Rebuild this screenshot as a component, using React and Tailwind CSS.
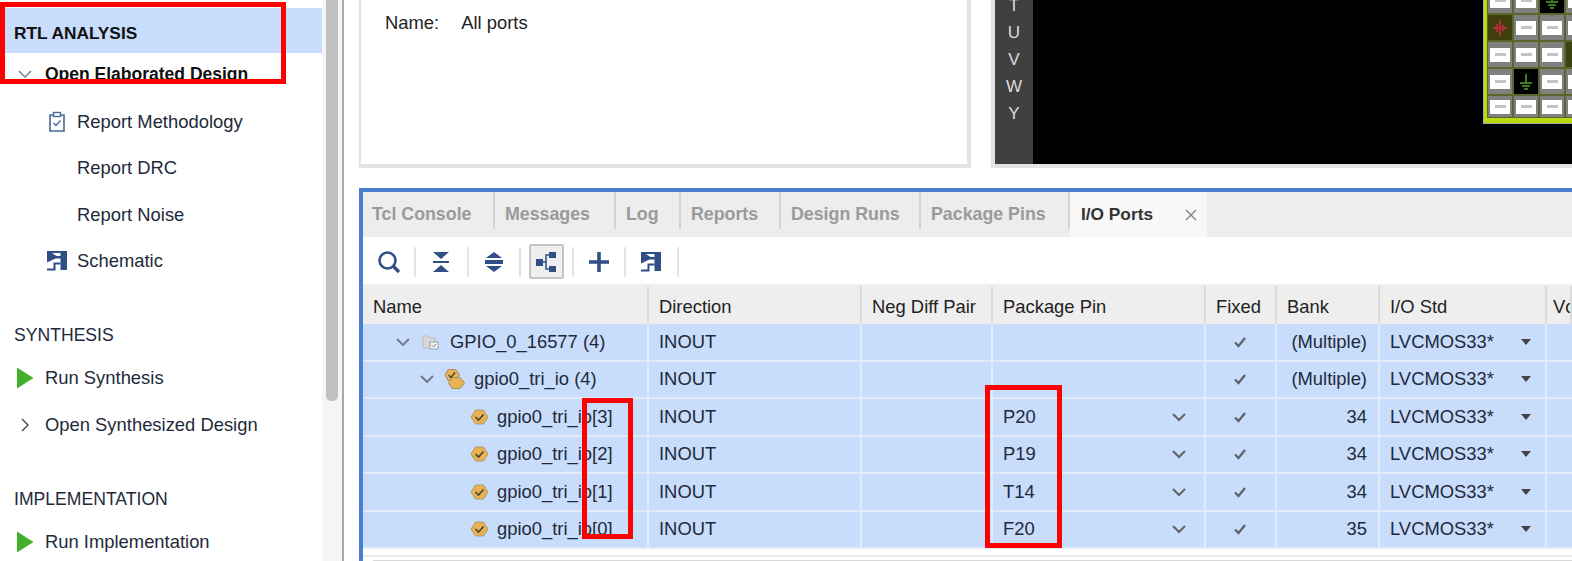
const BLUE = '#2f4f86';

function Chevron({ dir = 'down', className = '', color = '#666', sw = 1.4 }) {
  const d = dir === 'down' ? 'M2 5 L8 11 L14 5' : 'M5 2 L11 8 L5 14';
  return (
    <svg width="16" height="16" viewBox="0 0 16 16" className={className}>
      <path d={d} fill="none" stroke={color} strokeWidth={sw} />
    </svg>
  );
}

function Play() {
  return (
    <svg width="18" height="22" viewBox="0 0 18 22" className="shrink-0">
      <path d="M1 0.5 L17.5 11 L1 21.5 Z" fill="#43b02a" />
    </svg>
  );
}

function ClipCheck() {
  return (
    <svg width="18" height="22" viewBox="0 0 18 22" className="shrink-0">
      <path d="M5 4 H2 V20 H16 V4 H13" fill="none" stroke="#4a6796" strokeWidth="1.6" />
      <rect x="5.5" y="1.5" width="7" height="4" fill="none" stroke="#4a6796" strokeWidth="1.4" />
      <path d="M5.5 12 L8 14.5 L12.5 9.5" fill="none" stroke="#4a6796" strokeWidth="1.4" />
    </svg>
  );
}

function SchematicIcon({ size = 22 }) {
  return (
    <svg width={size} height={size} viewBox="0 0 22 22" className="shrink-0">
      <path fillRule="evenodd" d="M1 1 H21 V20 H14.5 V8.5 H9.5 L1 12.5 Z M6 3 L10.5 6 H14.5 V3 Z" fill={BLUE} />
      <path d="M1 19.5 H8.5 V13.5 H14.5" fill="none" stroke={BLUE} strokeWidth="2" />
    </svg>
  );
}

function Port({ className = '' }) {
  return (
    <svg width="19" height="18" viewBox="0 0 19 18" className={className}>
      <path d="M5.5 2 H13.5 L18 9 L13.5 16 H5.5 L1 9 Z" fill="#e8b250" stroke="#b09a70" strokeWidth="1" />
      <path d="M5.5 9 L8.5 12 L13.5 6.5" fill="none" stroke="#46443e" strokeWidth="1.6" />
    </svg>
  );
}

function PortGroup({ className = '' }) {
  return (
    <svg width="22" height="22" viewBox="0 0 22 22" className={className}>
      <path d="M4 1.5 H12 L15.5 7 L12 12.5 H4 L1 7 Z" fill="#e8b250" stroke="#a58f66" strokeWidth="1" />
      <path d="M8 9.5 H16 L20.5 15 L16 20.5 H8 L4.5 15 Z" fill="#e8b250" stroke="#a58f66" strokeWidth="1" />
      <path d="M4.5 7 L7 9.5 L11 4.5" fill="none" stroke="#46443e" strokeWidth="1.4" />
    </svg>
  );
}

function FolderIcon({ className = '' }) {
  return (
    <svg width="18" height="16" viewBox="0 0 18 16" className={className}>
      <path d="M1 2 H6 L8 4 H13 V14 H1 Z" fill="#d6d6d6" stroke="#bdbdbd" strokeWidth="1" />
      <rect x="8" y="8" width="8" height="7" fill="#eef1f5" stroke="#9aa0a8" strokeWidth="1" />
      <path d="M10 11.5 L11.5 13 L14 10" fill="none" stroke="#7f8790" strokeWidth="1" />
    </svg>
  );
}

function Check() {
  return (
    <svg width="14" height="12" viewBox="0 0 14 12">
      <path d="M2 6.5 L5.5 10 L12 2" fill="none" stroke="#5f6164" strokeWidth="2.2" />
    </svg>
  );
}

function Item({ icon, children, indent = false, bold = false, className = '' }) {
  return (
    <div className={`flex h-[46.5px] items-center ${className}`}>
      <div className={`flex shrink-0 items-center justify-center ${indent ? 'ml-[45px] w-[24px] mr-[8px]' : 'ml-[14px] w-[22px] mr-[9px]'}`}>{icon}</div>
      <span className={bold ? 'text-[17.5px] font-bold text-[#111]' : 'text-[#222a3a]'}>{children}</span>
    </div>
  );
}

function Sidebar() {
  return (
    <div className="w-[322px] shrink-0 bg-white pt-[8px]">
      <div className="flex h-[45px] items-center bg-[#c8dcfb] pl-[14px] pt-[7px] text-[17.3px] font-bold text-[#111]">RTL ANALYSIS</div>
      <Item bold className="-mt-[2px]" icon={<Chevron color="#6b7a96" />}>Open Elaborated Design</Item>
      <div className="pt-[1px]">
        <Item indent icon={<ClipCheck />}>Report Methodology</Item>
        <Item indent>Report DRC</Item>
        <Item indent>Report Noise</Item>
        <Item indent icon={<SchematicIcon />}>Schematic</Item>
      </div>
      <div className="mt-[33px] flex h-[37.5px] items-center pl-[14px] text-[17.6px] text-[#222a3a]">SYNTHESIS</div>
      <Item icon={<Play />}>Run Synthesis</Item>
      <Item icon={<Chevron dir="right" color="#444" />}>Open Synthesized Design</Item>
      <div className="mt-[33px] flex h-[38px] items-center pl-[14px] text-[17.6px] text-[#222a3a]">IMPLEMENTATION</div>
      <Item icon={<Play />}>Run Implementation</Item>
    </div>
  );
}

function Scroll() {
  return (
    <div className="flex w-[22px] shrink-0 border-r-2 border-[#a8a8a8] bg-[#f5f5f5] pl-[4px]">
      <div className="h-[401px] w-[12px] rounded-b-[5px] bg-[#c0c0c0]" />
    </div>
  );
}

const PIN = 'pin', PWR = 'pwr', GND = 'gnd', OLV = 'olv';
const CHIP = [
  [PIN, PIN, GND, PIN],
  [PWR, PIN, PIN, PIN],
  [PIN, PIN, PIN, OLV],
  [PIN, GND, PIN, PIN],
  [PIN, PIN, PIN, PIN],
];

function ChipCell({ type }) {
  if (type === PIN) {
    return (
      <div className="flex h-full items-center justify-center border border-[#59662b] bg-[#808080]">
        <div className="flex h-[14px] w-[20px] items-center justify-center bg-white">
          <div className="h-[3px] w-[11px] bg-[#c4c4c4]" />
        </div>
      </div>
    );
  }
  if (type === OLV) return <div className="h-full border border-[#59662b] bg-[#3d4212]" />;
  if (type === PWR) {
    return (
      <div className="flex h-full items-center justify-center border border-[#59662b] bg-[#3d3f0c]">
        <svg width="16" height="18" viewBox="0 0 16 18">
          <path d="M8 1 V17 M1 9 H15 M5 5 V13 M11 6 V12" stroke="#b32a3a" strokeWidth="2" fill="none" />
        </svg>
      </div>
    );
  }
  return (
    <div className="flex h-full items-center justify-center border border-[#59662b] bg-black">
      <svg width="14" height="18" viewBox="0 0 14 18">
        <path d="M7 1 V11 M1 10 H13 M3 13 H11 M5 16 H9" stroke="#3a7d20" strokeWidth="2" fill="none" />
      </svg>
    </div>
  );
}

function TopPanes() {
  return (
    <div className="flex h-[168px] shrink-0">
      <div className="w-[612px] shrink-0 border-b-4 border-l-2 border-r-4 border-[#e3e3e3] bg-white pl-[24px] pt-[14px] text-[#222]">
        <span className="mr-[22px]">Name:</span>All ports
      </div>
      <div className="ml-[20px] flex min-w-0 flex-1 overflow-hidden border-b-4 border-l-4 border-[#e3e3e3] bg-black">
        <div className="flex w-[38px] shrink-0 flex-col items-center justify-end bg-[#404040] pb-[37px] text-[17px] leading-[27px] text-[#dcdcdc]">
          {['T', 'U', 'V', 'W', 'Y'].map((l) => <div key={l}>{l}</div>)}
        </div>
        <div className="flex min-w-0 flex-1 flex-col justify-end overflow-hidden pb-[41px] pl-[451px]">
          <div className="w-[120px] shrink-0 border-b-[5px] border-l-[3px] border-[#b5dc10] outline outline-1 outline-[#aaa]">
            <div className="grid grid-cols-[26px_26px_26px_26px] grid-rows-[27px_27px_27px_27px_23px] bg-[#59662b]">
              {CHIP.flat().map((t, i) => <ChipCell key={i} type={t} />)}
            </div>
          </div>
        </div>
      </div>
    </div>
  );
}

const TABS = [
  ['Tcl Console', 'w-[132px] pl-[9px]'],
  ['Messages', 'w-[121px] pl-[10px]'],
  ['Log', 'w-[65px] pl-[10px]'],
  ['Reports', 'w-[100px] pl-[10px]'],
  ['Design Runs', 'w-[140px] pl-[10px]'],
  ['Package Pins', 'w-[149px] pl-[10px]'],
];

function Tabs() {
  return (
    <div className="flex h-[45px] shrink-0 items-start bg-[#ededed] text-[17.8px] font-bold text-[#9a9a9a]">
      {TABS.map(([t, c]) => (
        <div key={t} className={`flex h-[37px] items-center border-r-2 border-[#d4d4d4] pt-[8px] ${c}`}>{t}</div>
      ))}
      <div className="flex h-[45px] w-[137px] items-center justify-between bg-[#f8f8f8] pl-[11px] pr-[9px] text-[#333]">
        <span className="text-[17.3px]">I/O Ports</span>
        <svg width="14" height="14" viewBox="0 0 14 14"><path d="M2 2 L12 12 M12 2 L2 12" stroke="#8a8a8a" strokeWidth="1.5" /></svg>
      </div>
    </div>
  );
}

function ToolBtn({ children, active }) {
  return (
    <div className="flex h-full w-[52.5px] shrink-0 items-center">
      <div className={`flex h-[35px] w-[35px] items-center justify-center rounded-[2px] ${active ? 'border-2 border-[#c4c4c4] bg-[#efefef]' : ''}`}>
        {children}
      </div>
      <div className="ml-[8px] h-[30px] w-[2px] bg-[#e4e4e4]" />
    </div>
  );
}

function Toolbar() {
  return (
    <div className="flex h-[49px] shrink-0 items-center border-b-2 border-[#f0f0f0] bg-white pl-[8px] pt-[2px]">
      <ToolBtn>
        <svg width="24" height="24" viewBox="0 0 24 24">
          <circle cx="10.5" cy="10.5" r="8" fill="none" stroke={BLUE} strokeWidth="2.6" />
          <path d="M16 16 L22 22" stroke={BLUE} strokeWidth="3.2" />
        </svg>
      </ToolBtn>
      <ToolBtn>
        <svg width="20" height="22" viewBox="0 0 20 22">
          <path d="M2 1 H18 L10 8 Z M2 21 H18 L10 14 Z" fill={BLUE} />
          <rect x="2" y="10" width="16" height="2" fill={BLUE} />
        </svg>
      </ToolBtn>
      <ToolBtn>
        <svg width="20" height="22" viewBox="0 0 20 22">
          <path d="M10 1 L18 7 H2 Z M10 21 L18 15 H2 Z" fill={BLUE} />
          <rect x="1" y="9" width="18" height="4" fill={BLUE} />
        </svg>
      </ToolBtn>
      <ToolBtn active>
        <svg width="22" height="22" viewBox="0 0 22 22">
          <rect x="1" y="8" width="7" height="7" fill={BLUE} />
          <rect x="14" y="1" width="7" height="6" fill={BLUE} />
          <rect x="14" y="15" width="7" height="6" fill={BLUE} />
          <path d="M8 11 H11 V4 H14 M11 11 V18 H14" fill="none" stroke={BLUE} strokeWidth="1.5" />
        </svg>
      </ToolBtn>
      <ToolBtn>
        <svg width="22" height="22" viewBox="0 0 22 22"><path d="M11 1 V21 M1 11 H21" stroke={BLUE} strokeWidth="3.6" /></svg>
      </ToolBtn>
      <ToolBtn><SchematicIcon /></ToolBtn>
    </div>
  );
}

const GRID = 'grid grid-cols-[286px_213px_131px_213px_71px_103px_167px_1fr]';
const HEAD = [['Name', 'pl-[10px]'], ['Direction', 'pl-[10px]'], ['Neg Diff Pair', 'pl-[10px]'], ['Package Pin', 'pl-[10px]'], ['Fixed', 'pl-[10px]'], ['Bank', 'pl-[10px]'], ['I/O Std', 'pl-[10px]'], ['Vc', 'pl-[6px]']];

const ROWS = [
  { name: 'GPIO_0_16577 (4)', pad: 'pl-[32px]', chev: true, icon: <FolderIcon className="ml-[11px] mr-[10px]" />, pin: '', bank: '(Multiple)' },
  { name: 'gpio0_tri_io (4)', pad: 'pl-[56px]', chev: true, icon: <PortGroup className="ml-[9px] mr-[8px]" />, pin: '', bank: '(Multiple)' },
  { name: 'gpio0_tri_io[3]', pad: 'pl-[107px]', icon: <Port className="mr-[8px]" />, pin: 'P20', bank: '34' },
  { name: 'gpio0_tri_io[2]', pad: 'pl-[107px]', icon: <Port className="mr-[8px]" />, pin: 'P19', bank: '34' },
  { name: 'gpio0_tri_io[1]', pad: 'pl-[107px]', icon: <Port className="mr-[8px]" />, pin: 'T14', bank: '34' },
  { name: 'gpio0_tri_io[0]', pad: 'pl-[107px]', icon: <Port className="mr-[8px]" />, pin: 'F20', bank: '35' },
];

const cell = 'flex h-full items-center border-r-2 border-[#e2ebf8]';

function Table() {
  return (
    <div className="shrink-0">
      <div className={`${GRID} h-[38px] bg-[#eeeeee] text-[#222]`}>
        {HEAD.map(([h, c]) => (
          <div key={h} className={`flex h-full items-center overflow-hidden whitespace-nowrap border-r-2 border-[#dcdcdc] pt-[4px] ${c}`}>{h}</div>
        ))}
      </div>
      {ROWS.map((r) => (
        <div key={r.name} className={`${GRID} h-[37.5px] border-b-2 border-[#e2ebf8] bg-[#c8dcfb] text-[#222a3a]`}>
          <div className={`${cell} ${r.pad}`}>
            {r.chev && <Chevron color="#6f7683" sw={1.8} />}
            {r.icon}
            <span>{r.name}</span>
          </div>
          <div className={`${cell} pl-[10px]`}>INOUT</div>
          <div className={cell} />
          <div className={`${cell} justify-between pl-[10px] pr-[17px]`}>
            <span>{r.pin}</span>
            {r.pin && <Chevron color="#666" sw={2.2} />}
          </div>
          <div className={`${cell} justify-center pr-[1px]`}><Check /></div>
          <div className={`${cell} justify-end whitespace-nowrap pr-[11px]`}>{r.bank}</div>
          <div className={`${cell} justify-between pl-[10px] pr-[14px]`}>
            <span>LVCMOS33*</span>
            <svg width="10" height="6" viewBox="0 0 10 6"><path d="M0 0 H10 L5 6 Z" fill="#444" /></svg>
          </div>
          <div className="h-full" />
        </div>
      ))}
    </div>
  );
}

function BottomPanel() {
  return (
    <div className="mt-[20px] flex min-h-0 flex-1 flex-col border-l-[4px] border-t-[4px] border-[#4a7fd0] bg-white">
      <Tabs />
      <Toolbar />
      <Table />
      <div className="mt-[6px] flex-1 border-t-2 border-[#ededed] pl-[10px] pt-[3px]">
        <div className="h-[4px] bg-[#d8d8d8]" />
      </div>
    </div>
  );
}

function Marker({ className }) {
  return <div className={`pointer-events-none absolute border-[5px] border-[#ff0000] ${className}`} />;
}

export default function App() {
  return (
    <div className="relative flex h-[561px] w-[1572px] overflow-hidden bg-white text-[18.4px] leading-none" style={{ fontFamily: '"Liberation Sans", Arial, sans-serif' }}>
      <Sidebar />
      <Scroll />
      <div className="ml-[15px] flex min-w-0 flex-1 flex-col">
        <TopPanes />
        <BottomPanel />
      </div>
      <Marker className="left-0 top-[2px] h-[82px] w-[286px]" />
      <Marker className="left-[582px] top-[398px] h-[141px] w-[51px]" />
      <Marker className="left-[985px] top-[385px] h-[163px] w-[77px]" />
    </div>
  );
}
